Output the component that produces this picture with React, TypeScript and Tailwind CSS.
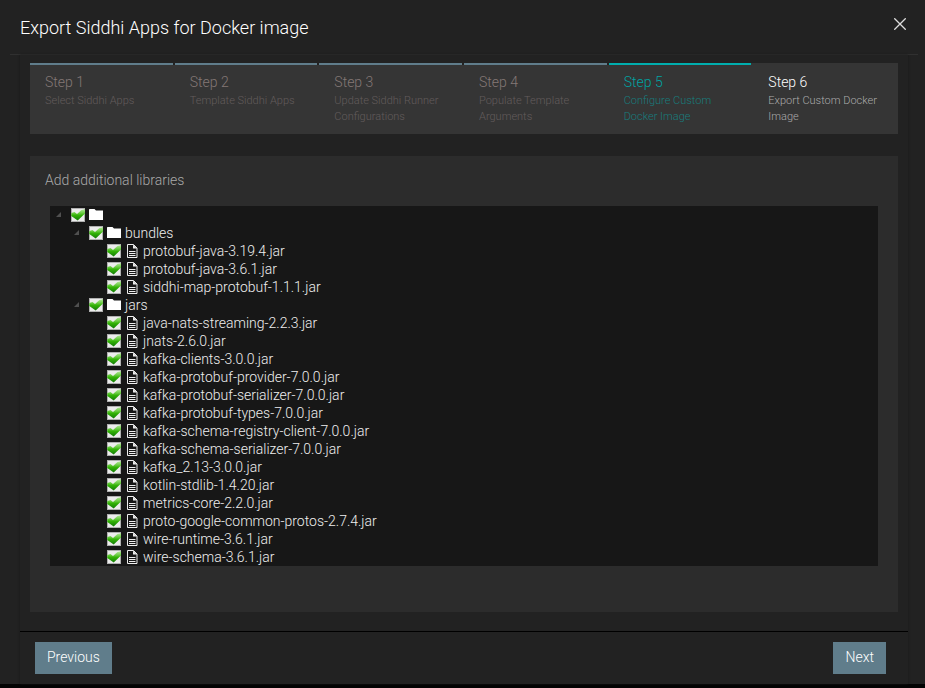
import { useState } from 'react';

type StepState = 'done' | 'active' | 'pending';

const steps: { title: string; text: string; state: StepState }[] = [
  { title: 'Step 1', text: 'Select Siddhi Apps', state: 'done' },
  { title: 'Step 2', text: 'Template Siddhi Apps', state: 'done' },
  { title: 'Step 3', text: 'Update Siddhi Runner Configurations', state: 'done' },
  { title: 'Step 4', text: 'Populate Template Arguments', state: 'done' },
  { title: 'Step 5', text: 'Configure Custom Docker Image', state: 'active' },
  { title: 'Step 6', text: 'Export Custom Docker Image', state: 'pending' },
];

const stepStyles: Record<StepState, { bar: string; title: string; text: string }> = {
  done: { bar: 'bg-[#607d8b] border-[#222222]', title: 'text-[#847876]', text: 'text-[#635c5c]' },
  active: { bar: 'bg-[#00aeae] border-[#353535]', title: 'text-[#00a3a3]', text: 'text-[#187d7d]' },
  pending: { bar: 'bg-[#353535] border-[#353535]', title: 'text-white', text: 'text-[#aaaaaa]' },
};

const bundles = ['protobuf-java-3.19.4.jar', 'protobuf-java-3.6.1.jar', 'siddhi-map-protobuf-1.1.1.jar'];

const jars = [
  'java-nats-streaming-2.2.3.jar',
  'jnats-2.6.0.jar',
  'kafka-clients-3.0.0.jar',
  'kafka-protobuf-provider-7.0.0.jar',
  'kafka-protobuf-serializer-7.0.0.jar',
  'kafka-protobuf-types-7.0.0.jar',
  'kafka-schema-registry-client-7.0.0.jar',
  'kafka-schema-serializer-7.0.0.jar',
  'kafka_2.13-3.0.0.jar',
  'kotlin-stdlib-1.4.20.jar',
  'metrics-core-2.2.0.jar',
  'proto-google-common-protos-2.7.4.jar',
  'wire-runtime-3.6.1.jar',
  'wire-schema-3.6.1.jar',
];

function FolderIcon() {
  return (
    <svg width="14" height="18" viewBox="0 0 14 18" fill="#ffffff" aria-hidden="true">
      <path d="M0.500 3h5l1.500 1.500H14V14H0V3.500z" />
    </svg>
  );
}

function FileIcon() {
  return (
    <svg width="14" height="18" viewBox="0 0 14 18" fill="none" stroke="#eeeeee" aria-hidden="true">
      <path d="M2.500 2.500h6l3.500 3.500v9.500h-9.500z" />
      <path d="M8 2.500v4h4z" fill="#eeeeee" stroke="none" />
      <path d="M4 9.500h6.500M4 11.500h6.500M4 13.500h6.500" />
    </svg>
  );
}

function CheckMark() {
  return (
    <svg className="pointer-events-none absolute inset-0 hidden peer-checked:block" width="14" height="14" viewBox="0 0 14 14" aria-hidden="true">
      <defs>
        <linearGradient id="leaf" x1="0" y1="0" x2="0" y2="1">
          <stop offset="0" stopColor="#b4e69c" />
          <stop offset="0.350" stopColor="#68cb40" />
          <stop offset="0.550" stopColor="#32b206" />
          <stop offset="1" stopColor="#137a08" />
        </linearGradient>
      </defs>
      <path d="M0.300 5L3.500 4L6 6L10.500 2L14 1.200V5.500L6.700 12.500L0.300 8z" fill="url(#leaf)" />
    </svg>
  );
}

function TreeRow({ name, label, folder = false }: { name: string; label?: string; folder?: boolean }) {
  const [checked, setChecked] = useState(true);
  return (
    <div className="flex h-[18px] items-center">
      <span className="flex w-[18px] shrink-0 pl-[3px]">
        {folder && (
          <svg width="6" height="6" viewBox="0 0 6 6" fill="#505050" aria-hidden="true">
            <path d="M5 0V5H0z" />
          </svg>
        )}
      </span>
      <label className="flex h-[18px] items-center gap-1">
        <span className="relative block size-[14px]">
          <input
            type="checkbox"
            checked={checked}
            aria-label={label}
            onChange={(e) => setChecked(e.target.checked)}
            className="peer block size-[14px] appearance-none border border-[#b0b0b0] bg-[#ececec]"
          />
          <CheckMark />
        </span>
        {folder ? <FolderIcon /> : <FileIcon />}
        <span>{name}</span>
      </label>
    </div>
  );
}

function Branch({ name, files }: { name: string; files: string[] }) {
  return (
    <li>
      <TreeRow name={name} folder />
      <ul className="pl-[18px]">
        {files.map((file) => (
          <li key={file}>
            <TreeRow name={file} />
          </li>
        ))}
      </ul>
    </li>
  );
}

export default function App() {
  return (
    <div className="min-h-screen border-b-4 border-[#030303] bg-[#222222] pr-[7px] pl-[10px] font-[Roboto,sans-serif] text-sm font-light text-white">
      <header className="flex h-[55px] items-center justify-between border-b border-[#303030] pr-3 pl-[10px]">
        <h1 className="pt-0.5 text-lg font-light">Export Siddhi Apps for Docker image</h1>
        <button type="button" aria-label="Close" className="mb-1.5">
          <svg width="12" height="12" viewBox="0 0 12 12" stroke="#dddddd" strokeWidth="1.300" aria-hidden="true">
            <path d="M0.300 0.300L11.700 11.700M11.700 0.300L0.300 11.700" />
          </svg>
        </button>
      </header>

      <main className="mr-[10px] ml-[10px] pt-2 shadow-[0_0_2px_#161616]">
        <ol className="mx-[10px] grid grid-cols-6 bg-[#353535]">
          {steps.map(({ title, text, state }) => (
            <li key={title} className="h-[71px]">
              <div className={`h-0.5 border-r-2 ${stepStyles[state].bar}`} />
              <div className="pt-2 pr-3 pl-[15px]">
                <h2 className={`text-sm leading-[18px] font-light ${stepStyles[state].title}`}>{title}</h2>
                <p className={`pt-0.5 text-[11px] leading-4 ${stepStyles[state].text}`}>{text}</p>
              </div>
            </li>
          ))}
        </ol>

        <section className="mx-[10px] mt-[22px] bg-[#2c2c2c] px-[15px] pt-[14px] pb-[46px]">
          <h2 className="leading-5 text-[#a9a9a9]">Add additional libraries</h2>
          <ul className="mt-4 mr-[5px] ml-[5px] bg-[#171717] pl-[3px] leading-[18px] text-[#eeeeee]">
            <li>
              <TreeRow name="" label="All libraries" folder />
              <ul className="pl-[18px]">
                <Branch name="bundles" files={bundles} />
                <Branch name="jars" files={jars} />
              </ul>
            </li>
          </ul>
        </section>

        <footer className="mt-[19px] flex justify-between border-t border-black pt-[10px] pr-[22px] pb-[10px] pl-[15px]">
          <button type="button" className="h-8 bg-[#607d8b] px-3 pb-0.5">
            Previous
          </button>
          <button type="button" className="h-8 bg-[#607d8b] px-3 pb-0.5">
            Next
          </button>
        </footer>
      </main>
    </div>
  );
}
